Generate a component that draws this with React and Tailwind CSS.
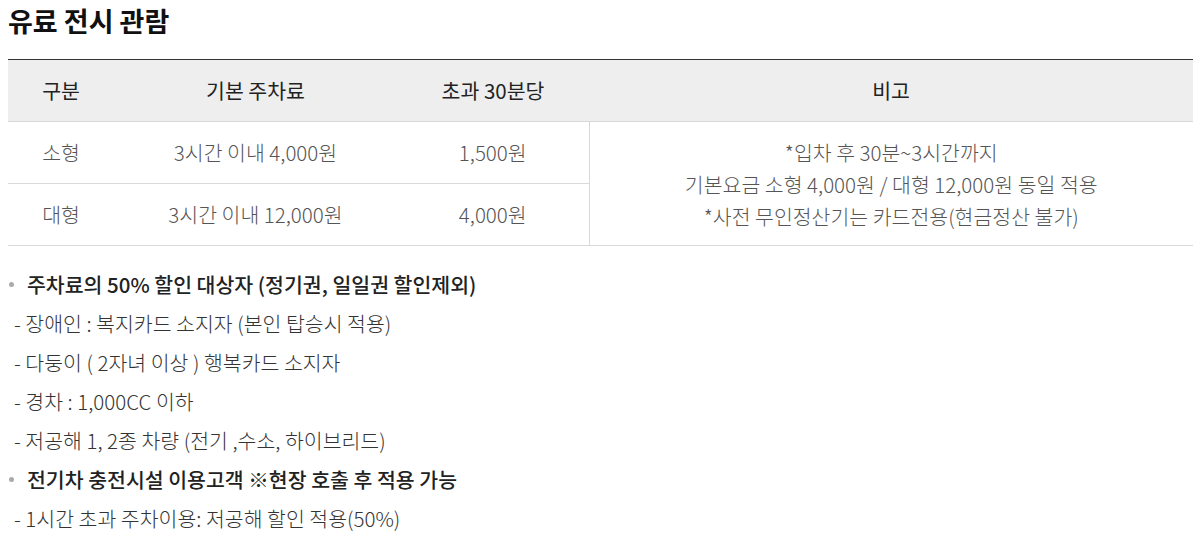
import React from "react";

const font = { fontFamily: '"Noto Sans CJK KR", "Noto Sans", sans-serif' };

const rows = [
  { type: "소형", base: "3시간 이내 4,000원", extra: "1,500원" },
  { type: "대형", base: "3시간 이내 12,000원", extra: "4,000원" },
];

const notes = [
  { bold: true, text: "주차료의 50% 할인 대상자 (정기권, 일일권 할인제외)" },
  { text: "- 장애인 : 복지카드 소지자 (본인 탑승시 적용)" },
  { text: "- 다둥이 ( 2자녀 이상 ) 행복카드 소지자" },
  { text: "- 경차 : 1,000CC 이하" },
  { text: "- 저공해 1, 2종 차량 (전기 ,수소, 하이브리드)" },
  { bold: true, text: "전기차 충전시설 이용고객 ※현장 호출 후 적용 가능" },
  { text: "- 1시간 초과 주차이용: 저공해 할인 적용(50%)" },
];

const App = () => {
  return (
    <div className="px-2 bg-white text-[#333]" style={font}>
      {/* TITLE */}
      <h2 className="pt-[3px] text-[27px] font-bold leading-[36px] text-[#111]">유료 전시 관람</h2>

      {/* FEE TABLE */}
      <table className="mt-[20px] w-full table-fixed border-collapse border-t border-[#333] text-[20.5px]">
        <colgroup>
          <col className="w-[106px]" />
          <col className="w-[283px]" />
          <col className="w-[192px]" />
          <col />
        </colgroup>
        <thead>
          <tr className="h-[62px] bg-[#eeeeee] border-b border-[#d9d9d9] text-[#222]">
            <th className="font-normal">구분</th>
            <th className="font-normal">기본 주차료</th>
            <th className="font-normal">초과 30분당</th>
            <th className="font-normal">비고</th>
          </tr>
        </thead>
        <tbody className="text-[#555] font-light">
          {rows.map((row, i) => (
            <tr key={row.type} className="h-[62px] border-b border-[#d9d9d9]">
              <td className="text-center">{row.type}</td>
              <td className="text-center">{row.base}</td>
              <td className="text-center">{row.extra}</td>
              {i === 0 && (
                <td rowSpan={2} className="border-l border-[#d9d9d9] text-center leading-[32px]">
                  <p>*입차 후 30분~3시간까지</p>
                  <p>기본요금 소형 4,000원 / 대형 12,000원 동일 적용</p>
                  <p>*사전 무인정산기는 카드전용(현금정산 불가)</p>
                </td>
              )}
            </tr>
          ))}
        </tbody>
      </table>

      {/* DISCOUNT NOTES */}
      <ul className="mt-[19px] text-[20.5px] leading-[39px]">
        {notes.map((note) =>
          note.bold ? (
            <li key={note.text} className="flex items-center font-medium text-[#222]">
              <span className="ml-[1px] mr-[13px] h-[5px] w-[5px] rounded-full bg-[#aaa]" />
              {note.text}
            </li>
          ) : (
            <li key={note.text} className="pl-[6px] font-light text-[#333]">
              {note.text}
            </li>
          )
        )}
      </ul>
    </div>
  );
};

export default App;
